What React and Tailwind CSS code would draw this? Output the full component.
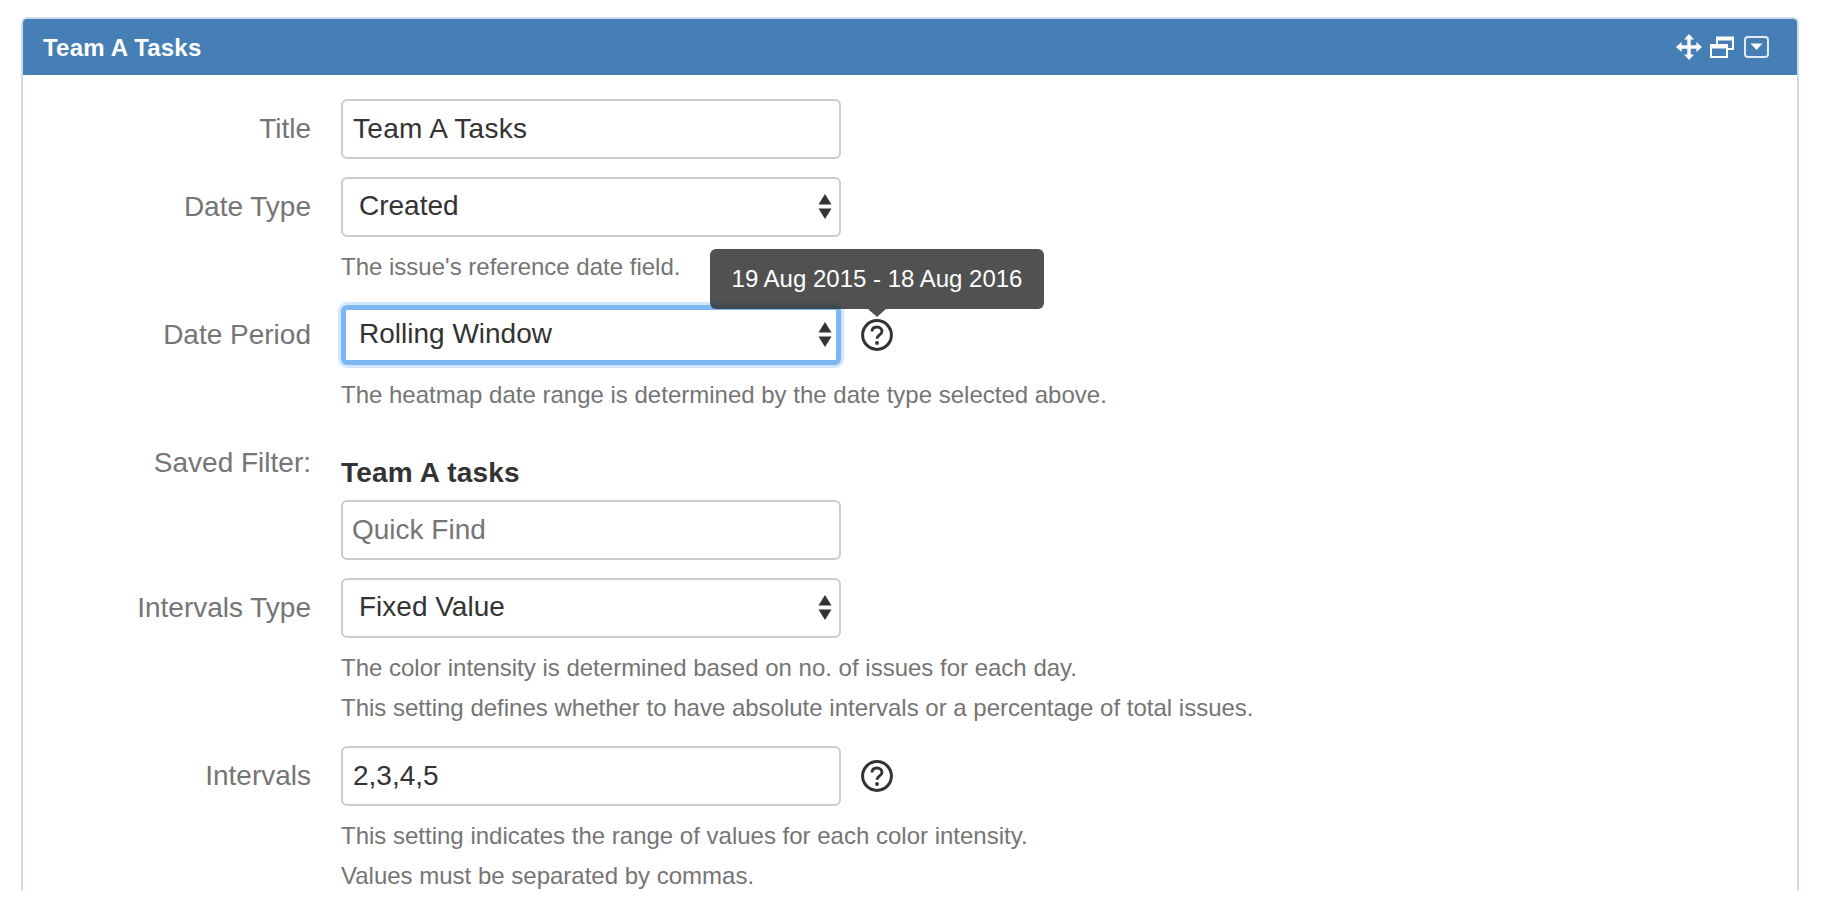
import { useState } from 'react';

function SelectArrows() {
  return (
    <svg width="14" height="26" viewBox="0 0 14 26" className="absolute right-[9px] top-[17px] pointer-events-none text-[#333]">
      <path d="M7 0 L13.5 10.5 H0.5 Z M0.5 14.5 H13.5 L7 25 Z" fill="currentColor" />
    </svg>
  );
}

function HelpIcon() {
  return (
    <svg width="32" height="32" viewBox="0 0 32 32" fill="none" stroke="#333" strokeWidth="3">
      <circle cx="16" cy="16" r="14.4" />
      <path d="M11 12.6 C11 9.6 13.2 8 16 8 C18.9 8 21 9.8 21 12.3 C21 16 16 16 16 19.8" strokeWidth="2.8" />
      <circle cx="16" cy="24" r="1.9" fill="#333" stroke="none" />
    </svg>
  );
}

function Row({ label, children, after }) {
  return (
    <div className="flex items-start mb-[18px] last:mb-0">
      <label className="w-[288px] mr-[30px] text-right text-[28px] leading-[60px] text-[#757575]">{label}</label>
      <div className="w-[500px] flex-shrink-0">{children}</div>
      {after}
    </div>
  );
}

function Help({ lines }) {
  return (
    <div className="relative mt-[10px] w-[1000px] text-[24px] leading-[40px] text-[#757575]">
      {lines.map((l) => (
        <p key={l}>{l}</p>
      ))}
    </div>
  );
}

const inputCls =
  'block w-full h-[60px] bg-white border-2 border-[#ccc] rounded-[6px] pl-[10px] text-[28px] text-[#333] outline-none placeholder:text-[#757575]';

const selectCls =
  'block w-full h-[60px] bg-white border-2 border-[#ccc] rounded-[6px] pl-[16px] pb-[2px] text-[28px] text-[#333] outline-none appearance-none';

export default function App() {
  const [title, setTitle] = useState('Team A Tasks');
  const [intervals, setIntervals] = useState('2,3,4,5');

  return (
    <div className="h-[900px] bg-white font-['Liberation_Sans',Arial,sans-serif] pt-[17px] pl-[21px] overflow-hidden">
      <div className="w-[1778px] h-[874px] overflow-hidden border-2 border-b-0 border-[#cddcec] rounded-t-[6px]">

        {/* Header */}
        <div className="h-[56px] bg-[#457fb5] flex items-center justify-between pl-[20px] pr-[28px]">
          <span className="text-white font-bold text-[24px] pt-[1px] tracking-[0.2px]">Team A Tasks</span>
          <div className="flex items-center">
            <svg width="26" height="26" viewBox="0 0 26 26" fill="white" className="mr-[8px]">
              <path d="M13 0 L18 5.6 H14.7 V11.3 H20.4 V8 L26 13 L20.4 18 V14.7 H14.7 V20.4 H18 L13 26 L8 20.4 H11.3 V14.7 H5.6 V18 L0 13 L5.6 8 V11.3 H11.3 V5.6 H8 Z" />
            </svg>
            <svg width="24" height="22" viewBox="0 0 24 22" fill="none" stroke="white" strokeWidth="2" className="mr-[10px]">
              <path d="M7 8 V1.5 H23 V13 H17" strokeWidth="2" />
              <path d="M7 3 H23" strokeWidth="3" />
              <rect x="1" y="9" width="16" height="12" />
              <path d="M1 11 H17" strokeWidth="3" />
            </svg>
            <svg width="25" height="22" viewBox="0 0 25 22" fill="none" stroke="white" strokeWidth="2">
              <rect x="1" y="1" width="23" height="20" rx="3" strokeOpacity="0.85" />
              <path d="M6.5 7.5 H18.5 L12.5 14 Z" fill="white" stroke="none" />
            </svg>
          </div>
        </div>

        {/* Form */}
        <div className="pt-[24px]">
          <Row label="Title">
            <input className={`${inputCls} tracking-[0.3px]`} value={title} onChange={(e) => setTitle(e.target.value)} />
          </Row>

          <Row label="Date Type">
            <div className="relative">
              <select className={selectCls} defaultValue="Created">
                <option>Created</option>
              </select>
              <SelectArrows />
            </div>
            <Help lines={["The issue's reference date field."]} />
          </Row>

          <Row
            label="Date Period"
            after={
              <div className="relative ml-[20px] mt-[14px] h-[32px]">
                <HelpIcon />
                <div className="absolute left-[-151px] top-[-70px] w-[334px] h-[60px] flex items-center justify-center rounded-[6px] bg-[#333]/85 text-white text-[24px] whitespace-nowrap">
                  19 Aug 2015 - 18 Aug 2016
                </div>
                <div className="absolute left-[7px] top-[-10px] border-x-[9px] border-x-transparent border-t-[8px] border-t-[#333]/85" />
              </div>
            }
          >
            <div className="relative">
              <select
                className="block w-full h-[60px] bg-white border-[5px] border-[#7db7f1] shadow-[0_0_0_3px_#d3e6fa] rounded-[6px] pl-[13px] pb-[2px] text-[28px] text-[#333] outline-none appearance-none"
                defaultValue="Rolling Window"
              >
                <option>Rolling Window</option>
              </select>
              <SelectArrows />
            </div>
            <Help lines={['The heatmap date range is determined by the date type selected above.']} />
          </Row>

          <Row label="Saved Filter:">
            <div className="pt-[20px] text-[28px] leading-[40px] font-bold text-[#333] tracking-[0.2px]">Team A tasks</div>
            <input className={`${inputCls} mt-[7px] !pl-[9px]`} placeholder="Quick Find" />
          </Row>

          <Row label="Intervals Type">
            <div className="relative">
              <select className={selectCls} defaultValue="Fixed Value">
                <option>Fixed Value</option>
              </select>
              <SelectArrows />
            </div>
            <Help
              lines={[
                'The color intensity is determined based on no. of issues for each day.',
                'This setting defines whether to have absolute intervals or a percentage of total issues.',
              ]}
            />
          </Row>

          <Row
            label="Intervals"
            after={
              <div className="ml-[20px] mt-[14px] h-[32px]">
                <HelpIcon />
              </div>
            }
          >
            <input className={inputCls} value={intervals} onChange={(e) => setIntervals(e.target.value)} />
            <Help
              lines={[
                'This setting indicates the range of values for each color intensity.',
                'Values must be separated by commas.',
              ]}
            />
          </Row>
        </div>
      </div>
    </div>
  );
}
